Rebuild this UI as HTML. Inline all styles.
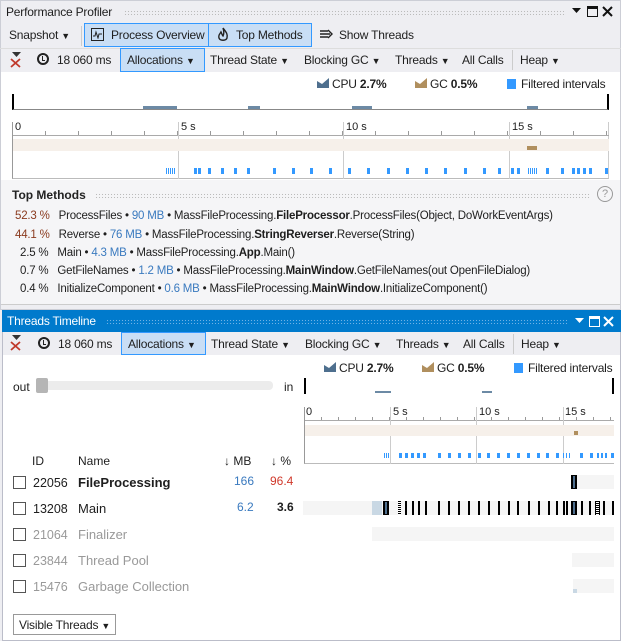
<!DOCTYPE html>
<html><head><meta charset="utf-8"><style>
*{box-sizing:border-box;margin:0;padding:0}
body{width:621px;height:641px;position:relative;overflow:hidden;background:#eeeef2;font-family:"Liberation Sans",sans-serif;font-size:12px;color:#1e1e1e}
.a{position:absolute;white-space:nowrap}
.t{letter-spacing:-0.2px}
.btn{position:absolute;background:#c9def5;border:1px solid #3399ff}
.dd{font-size:9px}
.b{position:absolute;background:#3399ff;width:3px}
.k{position:absolute;background:#000;width:2px;top:501px;height:14px}
.dots{position:absolute;height:5px;background-image:radial-gradient(#bbb 0.6px,transparent 0.8px);background-size:3px 3px}
.tick{position:absolute;width:1px;background:#999}
.clk{position:absolute;width:12px;height:12px;border:2px solid #222;border-radius:50%}
.clk::after{content:"";position:absolute;left:3px;top:1px;width:2px;height:4px;border-left:1.5px solid #222;border-bottom:1.5px solid #222}
</style></head><body>
<div class="a" style="left:0;top:0;width:621px;height:310px;border:1px solid #ccced6;background:#eeeef2"></div>
<div class="a t" style="left:6px;top:5px;font-size:12px">Performance Profiler</div>
<div class="dots" style="left:124px;top:10px;width:442px"></div>
<svg class="a" style="left:572px;top:8px" width="9" height="6"><path d="M0 0 L9 0 L4.5 5Z" fill="#111"/></svg>
<div class="a" style="left:587px;top:6px;width:11px;height:11px;border:1.5px solid #111;border-top-width:3px"></div>
<svg class="a" style="left:602px;top:6px" width="11" height="11"><path d="M1 1 L10 10 M10 1 L1 10" stroke="#111" stroke-width="2"/></svg>
<div class="a t" style="left:9px;top:28px">Snapshot <span class="dd">▼</span></div>
<div class="a" style="left:81px;top:26px;width:1px;height:20px;background:#ccc"></div>
<div class="btn" style="left:84px;top:23px;width:125px;height:24px"></div>
<div class="btn" style="left:208px;top:23px;width:104px;height:24px"></div>
<div class="a" style="left:91px;top:28px;width:13px;height:13px;border:1.5px solid #222"></div>
<svg class="a" style="left:92px;top:30px" width="11" height="9"><path d="M1 6 L3 6 L4 2 L6 8 L7 4 L10 4" stroke="#222" fill="none" stroke-width="1"/></svg>
<div class="a t" style="left:111px;top:28px">Process Overview</div>
<svg class="a" style="left:217px;top:27px" width="12" height="15"><path d="M6 1 C9 5 11 7 10 11 C9 14 3 14 2 11 C1 8 3 7 4 5 C5 7 5 8 6 9 C7 7 7 4 6 1Z" fill="none" stroke="#222" stroke-width="1.4"/></svg>
<div class="a t" style="left:236px;top:28px">Top Methods</div>
<svg class="a" style="left:320px;top:29px" width="13" height="11"><path d="M0 2 H8 M0 5 H10 M0 8 H8 M8 1 L12 5 L8 9" stroke="#222" fill="none" stroke-width="1.4"/></svg>
<div class="a t" style="left:339px;top:28px">Show Threads</div>
<div class="a" style="left:0;top:48px;width:621px;height:1px;background:#ddd"></div>
<svg class="a" style="left:9px;top:51px" width="14" height="17"><path d="M3 1 H12 L7.5 6Z" fill="#333"/><path d="M2 8 L11 16 M11 8 L2 16" stroke="#c0392b" stroke-width="1.8"/></svg>
<div class="clk" style="left:37px;top:53px"></div>
<div class="a t" style="left:57px;top:53px">18 060 ms</div>
<div class="btn" style="left:120px;top:48px;width:85px;height:24px"></div>
<div class="a t" style="left:127px;top:53px">Allocations <span class="dd">▼</span></div>
<div class="a t" style="left:210px;top:53px">Thread State <span class="dd">▼</span></div>
<div class="a t" style="left:304px;top:53px">Blocking GC <span class="dd">▼</span></div>
<div class="a t" style="left:395px;top:53px">Threads <span class="dd">▼</span></div>
<div class="a t" style="left:462px;top:53px">All Calls</div>
<div class="a" style="left:512px;top:50px;width:1px;height:20px;background:#ccc"></div>
<div class="a t" style="left:520px;top:53px">Heap <span class="dd">▼</span></div>
<div class="a" style="left:1px;top:72px;width:619px;height:108px;background:#fff"></div>
<svg class="a" style="left:317px;top:78px" width="12" height="10"><path d="M0 10 L0 3 L5 6 L12 0 L12 10Z" fill="#4e6f8e"/></svg>
<div class="a t" style="left:332px;top:77px">CPU <b>2.7%</b></div>
<svg class="a" style="left:415px;top:78px" width="12" height="10"><path d="M0 10 L0 3 L5 6 L12 0 L12 10Z" fill="#b08f5e"/></svg>
<div class="a t" style="left:430px;top:77px">GC <b>0.5%</b></div>
<div class="a" style="left:507px;top:79px;width:9px;height:10px;background:#3399ff"></div>
<div class="a t" style="left:521px;top:77px">Filtered intervals</div>
<div class="a" style="left:12px;top:94px;width:597px;height:16px;border-left:2px solid #000;border-right:2px solid #000;border-bottom:1px solid #888"></div>
<div class="a" style="left:143px;top:106px;width:34px;height:3px;background:#6c8aa5"></div>
<div class="a" style="left:248px;top:106px;width:12px;height:3px;background:#6c8aa5"></div>
<div class="a" style="left:352px;top:106px;width:20px;height:3px;background:#6c8aa5"></div>
<div class="a" style="left:527px;top:106px;width:11px;height:3px;background:#6c8aa5"></div>
<div class="a" style="left:12px;top:122px;width:597px;height:57px;border-left:1px solid #999;border-right:1px solid #ccc;border-bottom:1px solid #bbb"></div>
<div class="a" style="left:13px;top:135px;width:596px;height:1px;background:#aaa"></div>
<div class="a" style="left:15px;top:121px;font-size:11px">0</div>
<div class="a" style="left:181px;top:121px;font-size:11px">5 s</div>
<div class="a" style="left:346px;top:121px;font-size:11px">10 s</div>
<div class="a" style="left:512px;top:121px;font-size:11px">15 s</div>
<div class="tick" style="left:178px;top:122px;height:57px;background:#ccc"></div>
<div class="tick" style="left:343px;top:122px;height:57px;background:#ccc"></div>
<div class="tick" style="left:509px;top:122px;height:57px;background:#ccc"></div>
<div class="a" style="left:13px;top:131px;width:596px;height:4px;background:repeating-linear-gradient(90deg,transparent 0 32px,#999 32px 33px)"></div>
<div class="a" style="left:13px;top:139px;width:596px;height:12px;background:#f6f0ea"></div>
<div class="a" style="left:527px;top:146px;width:10px;height:4px;background:#b08f5e"></div>
<div class="a" style="left:166px;top:168px;width:9px;height:6px;background:repeating-linear-gradient(90deg,#3399ff 0 1px,transparent 1px 2px)"></div>
<div class="a" style="left:528px;top:168px;width:10px;height:6px;background:repeating-linear-gradient(90deg,#3399ff 0 1px,transparent 1px 2px)"></div>
<div style="position:absolute;top:168px;height:6px;left:0">
<div class="b" style="left:194px;height:6px"></div><div class="b" style="left:198px;height:6px"></div><div class="b" style="left:208px;height:6px"></div><div class="b" style="left:221px;height:6px"></div><div class="b" style="left:234px;height:6px"></div><div class="b" style="left:247px;height:6px"></div><div class="b" style="left:273px;height:6px"></div><div class="b" style="left:292px;height:6px"></div><div class="b" style="left:310px;height:6px"></div><div class="b" style="left:329px;height:6px"></div><div class="b" style="left:348px;height:6px"></div><div class="b" style="left:367px;height:6px"></div><div class="b" style="left:387px;height:6px"></div><div class="b" style="left:406px;height:6px"></div><div class="b" style="left:425px;height:6px"></div><div class="b" style="left:444px;height:6px"></div><div class="b" style="left:464px;height:6px"></div><div class="b" style="left:483px;height:6px"></div><div class="b" style="left:498px;height:6px"></div><div class="b" style="left:511px;height:6px"></div><div class="b" style="left:517px;height:6px"></div><div class="b" style="left:546px;height:6px"></div><div class="b" style="left:561px;height:6px"></div><div class="b" style="left:572px;height:6px"></div><div class="b" style="left:577px;height:6px"></div><div class="b" style="left:583px;height:6px"></div><div class="b" style="left:589px;height:6px"></div><div class="b" style="left:605px;height:6px"></div>
</div>
<div class="a" style="left:1px;top:180px;width:619px;height:125px;background:#f5f5f7;border-bottom:1px solid #ccc"></div>
<div class="a" style="left:12px;top:188px;font-weight:bold;color:#222">Top Methods</div>
<div class="dots" style="left:95px;top:193px;width:495px"></div>
<div class="a" style="left:597px;top:186px;width:16px;height:16px;border:1px solid #999;border-radius:50%;color:#999;font-size:11px;text-align:center;line-height:14px">?</div>
<div class="a t" style="left:15px;top:210px;font-size:11.5px"><span style="color:#8a3a1e">52.3 %</span>&nbsp;&nbsp; ProcessFiles • <span style="color:#3a7abf">90 MB</span> • MassFileProcessing.<b>FileProcessor</b>.ProcessFiles(Object, DoWorkEventArgs)</div>
<div class="a t" style="left:15px;top:229px;font-size:11.5px"><span style="color:#8a3a1e">44.1 %</span>&nbsp;&nbsp; Reverse • <span style="color:#3a7abf">76 MB</span> • MassFileProcessing.<b>StringReverser</b>.Reverse(String)</div>
<div class="a t" style="left:20px;top:247px;font-size:11.5px">2.5 %&nbsp;&nbsp; Main • <span style="color:#3a7abf">4.3 MB</span> • MassFileProcessing.<b>App</b>.Main()</div>
<div class="a t" style="left:20px;top:265px;font-size:11.5px">0.7 %&nbsp;&nbsp; GetFileNames • <span style="color:#3a7abf">1.2 MB</span> • MassFileProcessing.<b>MainWindow</b>.GetFileNames(out OpenFileDialog)</div>
<div class="a t" style="left:20px;top:283px;font-size:11.5px">0.4 %&nbsp;&nbsp; InitializeComponent • <span style="color:#3a7abf">0.6 MB</span> • MassFileProcessing.<b>MainWindow</b>.InitializeComponent()</div>

<div class="a" style="left:2px;top:310px;width:619px;height:331px;border:1px solid #bbbdc9;background:#fff"></div>
<div class="a" style="left:2px;top:310px;width:619px;height:22px;background:#007acc"></div>
<div class="a t" style="left:7px;top:314px;color:#fff">Threads Timeline</div>
<div class="dots" style="left:106px;top:319px;width:462px;background-image:radial-gradient(#6fb2e6 0.6px,transparent 0.8px)"></div>
<svg class="a" style="left:575px;top:318px" width="9" height="6"><path d="M0 0 L9 0 L4.5 5Z" fill="#fff"/></svg>
<div class="a" style="left:589px;top:316px;width:11px;height:11px;border:1.5px solid #fff;border-top-width:3px"></div>
<svg class="a" style="left:603px;top:316px" width="11" height="11"><path d="M1 1 L10 10 M10 1 L1 10" stroke="#fff" stroke-width="2"/></svg>
<div class="a" style="left:3px;top:332px;width:617px;height:23px;background:#eeeef2"></div>
<svg class="a" style="left:9px;top:334px" width="14" height="17"><path d="M3 1 H12 L7.5 6Z" fill="#333"/><path d="M2 8 L11 16 M11 8 L2 16" stroke="#c0392b" stroke-width="1.8"/></svg>
<div class="clk" style="left:38px;top:337px"></div>
<div class="a t" style="left:58px;top:337px">18 060 ms</div>
<div class="btn" style="left:121px;top:332px;width:85px;height:23px"></div>
<div class="a t" style="left:128px;top:337px">Allocations <span class="dd">▼</span></div>
<div class="a t" style="left:211px;top:337px">Thread State <span class="dd">▼</span></div>
<div class="a t" style="left:305px;top:337px">Blocking GC <span class="dd">▼</span></div>
<div class="a t" style="left:396px;top:337px">Threads <span class="dd">▼</span></div>
<div class="a t" style="left:463px;top:337px">All Calls</div>
<div class="a" style="left:513px;top:334px;width:1px;height:20px;background:#ccc"></div>
<div class="a t" style="left:521px;top:337px">Heap <span class="dd">▼</span></div>
<svg class="a" style="left:324px;top:362px" width="12" height="10"><path d="M0 10 L0 3 L5 6 L12 0 L12 10Z" fill="#4e6f8e"/></svg>
<div class="a t" style="left:339px;top:361px">CPU <b>2.7%</b></div>
<svg class="a" style="left:422px;top:362px" width="12" height="10"><path d="M0 10 L0 3 L5 6 L12 0 L12 10Z" fill="#b08f5e"/></svg>
<div class="a t" style="left:437px;top:361px">GC <b>0.5%</b></div>
<div class="a" style="left:514px;top:363px;width:9px;height:10px;background:#3399ff"></div>
<div class="a t" style="left:528px;top:361px">Filtered intervals</div>
<div class="a" style="left:13px;top:380px">out</div>
<div class="a" style="left:36px;top:381px;width:237px;height:9px;background:#ececec;border-radius:4px"></div>
<div class="a" style="left:36px;top:378px;width:12px;height:15px;background:#b5b5b5;border-radius:2px"></div>
<div class="a" style="left:284px;top:380px">in</div>
<div class="a" style="left:304px;top:378px;width:310px;height:16px;border-left:2px solid #000;border-right:2px solid #000"></div>
<div class="a" style="left:375px;top:391px;width:16px;height:2px;background:#6c8aa5"></div>
<div class="a" style="left:482px;top:391px;width:10px;height:2px;background:#6c8aa5"></div>
<div class="a" style="left:304px;top:407px;width:310px;height:57px;border-left:1px solid #999;border-bottom:1px solid #bbb"></div>
<div class="a" style="left:305px;top:420px;width:309px;height:1px;background:#aaa"></div>
<div class="a" style="left:306px;top:406px;font-size:11px">0</div>
<div class="a" style="left:393px;top:406px;font-size:11px">5 s</div>
<div class="a" style="left:479px;top:406px;font-size:11px">10 s</div>
<div class="a" style="left:565px;top:406px;font-size:11px">15 s</div>
<div class="tick" style="left:390px;top:407px;height:57px;background:#ccc"></div>
<div class="tick" style="left:476px;top:407px;height:57px;background:#ccc"></div>
<div class="tick" style="left:563px;top:407px;height:57px;background:#ccc"></div>
<div class="a" style="left:305px;top:417px;width:309px;height:3px;background:repeating-linear-gradient(90deg,transparent 0 16px,#999 16px 17px)"></div>
<div class="a" style="left:305px;top:425px;width:309px;height:11px;background:#f6f0ea"></div>
<div class="a" style="left:574px;top:431px;width:4px;height:4px;background:#b08f5e"></div>
<div style="position:absolute;top:453px;left:0">
<div class="b" style="left:384px;height:5px;width:1px"></div><div class="b" style="left:386px;height:5px;width:1px"></div><div class="b" style="left:388px;height:5px;width:1px"></div><div class="b" style="left:399px;height:5px"></div><div class="b" style="left:405px;height:5px"></div><div class="b" style="left:411px;height:5px"></div><div class="b" style="left:417px;height:5px"></div><div class="b" style="left:423px;height:5px"></div><div class="b" style="left:438px;height:5px"></div><div class="b" style="left:448px;height:5px"></div><div class="b" style="left:458px;height:5px"></div><div class="b" style="left:468px;height:5px"></div><div class="b" style="left:478px;height:5px"></div><div class="b" style="left:487px;height:5px"></div><div class="b" style="left:497px;height:5px"></div><div class="b" style="left:507px;height:5px"></div><div class="b" style="left:517px;height:5px"></div><div class="b" style="left:527px;height:5px"></div><div class="b" style="left:537px;height:5px"></div><div class="b" style="left:546px;height:5px"></div><div class="b" style="left:556px;height:5px"></div><div class="b" style="left:563px;height:5px;width:1px"></div><div class="b" style="left:566px;height:5px;width:1px"></div><div class="b" style="left:569px;height:5px;width:1px"></div><div class="b" style="left:580px;height:5px"></div><div class="b" style="left:590px;height:5px"></div><div class="b" style="left:597px;height:5px;width:2px"></div><div class="b" style="left:601px;height:5px;width:2px"></div><div class="b" style="left:605px;height:5px;width:2px"></div><div class="b" style="left:611px;height:5px"></div>
</div>
<div class="a" style="left:32px;top:454px">ID</div>
<div class="a" style="left:78px;top:454px">Name</div>
<div class="a" style="left:224px;top:454px">↓ MB</div>
<div class="a" style="left:271px;top:454px">↓ %</div>
<div class="a" style="left:13px;top:476px;width:13px;height:13px;border:1px solid #555"></div>
<div class="a" style="left:33px;top:476px;font-size:12.5px">22056</div>
<div class="a" style="left:78px;top:475px;font-size:13px;font-weight:bold">FileProcessing</div>
<div class="a" style="left:234px;top:474px;color:#3a7abf">166</div>
<div class="a" style="left:270px;top:474px;color:#d0392b">96.4</div>
<div class="a" style="left:13px;top:502px;width:13px;height:13px;border:1px solid #555"></div>
<div class="a" style="left:33px;top:502px;font-size:12.5px">13208</div>
<div class="a" style="left:78px;top:501px;font-size:13px">Main</div>
<div class="a" style="left:237px;top:500px;color:#3a7abf">6.2</div>
<div class="a" style="left:277px;top:500px;font-weight:bold">3.6</div>
<div class="a" style="left:13px;top:528px;width:13px;height:13px;border:1px solid #555"></div>
<div class="a" style="left:33px;top:528px;font-size:12.5px;color:#999">21064</div>
<div class="a" style="left:78px;top:527px;font-size:13px;color:#999">Finalizer</div>
<div class="a" style="left:13px;top:554px;width:13px;height:13px;border:1px solid #555"></div>
<div class="a" style="left:33px;top:554px;font-size:12.5px;color:#999">23844</div>
<div class="a" style="left:78px;top:553px;font-size:13px;color:#999">Thread Pool</div>
<div class="a" style="left:13px;top:580px;width:13px;height:13px;border:1px solid #555"></div>
<div class="a" style="left:33px;top:580px;font-size:12.5px;color:#999">15476</div>
<div class="a" style="left:78px;top:579px;font-size:13px;color:#999">Garbage Collection</div>
<div class="a" style="left:13px;top:614px;width:103px;height:21px;border:1px solid #999;background:#fff"></div>
<div class="a t" style="left:19px;top:618px">Visible Threads <span class="dd">▼</span></div>
<div class="a" style="left:571px;top:475px;width:43px;height:14px;background:#f5f5f5"></div>
<div class="a" style="left:571px;top:475px;width:6px;height:14px;background:#000;border:1px solid #000"><div style="margin-left:1px;width:2px;height:12px;background:#4e6f8e"></div></div>
<div class="a" style="left:303px;top:501px;width:311px;height:14px;background:#f5f5f5"></div>
<div class="a" style="left:372px;top:501px;width:10px;height:14px;background:#c9d8e4"></div>
<div class="a" style="left:383px;top:501px;width:6px;height:14px;background:#000"><div style="margin:1px 0 0 2px;width:2px;height:12px;background:#4e6f8e"></div></div>
<div class="k" style="left:398px;width:3px;background:repeating-linear-gradient(#000 0 1px,#fff 1px 2px)"></div>
<div class="k" style="left:405px"></div><div class="k" style="left:412px"></div><div class="k" style="left:418px"></div><div class="k" style="left:425px"></div><div class="k" style="left:438px"></div><div class="k" style="left:448px"></div><div class="k" style="left:458px"></div><div class="k" style="left:468px"></div><div class="k" style="left:478px"></div><div class="k" style="left:488px"></div><div class="k" style="left:498px"></div><div class="k" style="left:508px"></div><div class="k" style="left:517px"></div><div class="k" style="left:528px"></div><div class="k" style="left:538px"></div><div class="k" style="left:548px"></div><div class="k" style="left:556px"></div><div class="k" style="left:563px"></div><div class="k" style="left:566px"></div>
<div class="a" style="left:571px;top:501px;width:6px;height:14px;background:#000"><div style="margin:1px 0 0 2px;width:2px;height:12px;background:#4e6f8e"></div></div>
<div class="k" style="left:581px"></div><div class="k" style="left:589px"></div>
<div class="k" style="left:595px;width:5px;background:repeating-linear-gradient(#000 0 1px,#fff 1px 2px);border-left:1px solid #000;border-right:1px solid #000"></div>
<div class="k" style="left:603px"></div><div class="k" style="left:612px"></div>
<div class="a" style="left:372px;top:527px;width:242px;height:14px;background:#f5f5f5"></div>
<div class="a" style="left:572px;top:553px;width:42px;height:14px;background:#f5f5f5"></div>
<div class="a" style="left:573px;top:579px;width:41px;height:14px;background:#f5f5f5"></div>
<div class="a" style="left:573px;top:589px;width:4px;height:4px;background:#c9d8e4"></div>
</body></html>
